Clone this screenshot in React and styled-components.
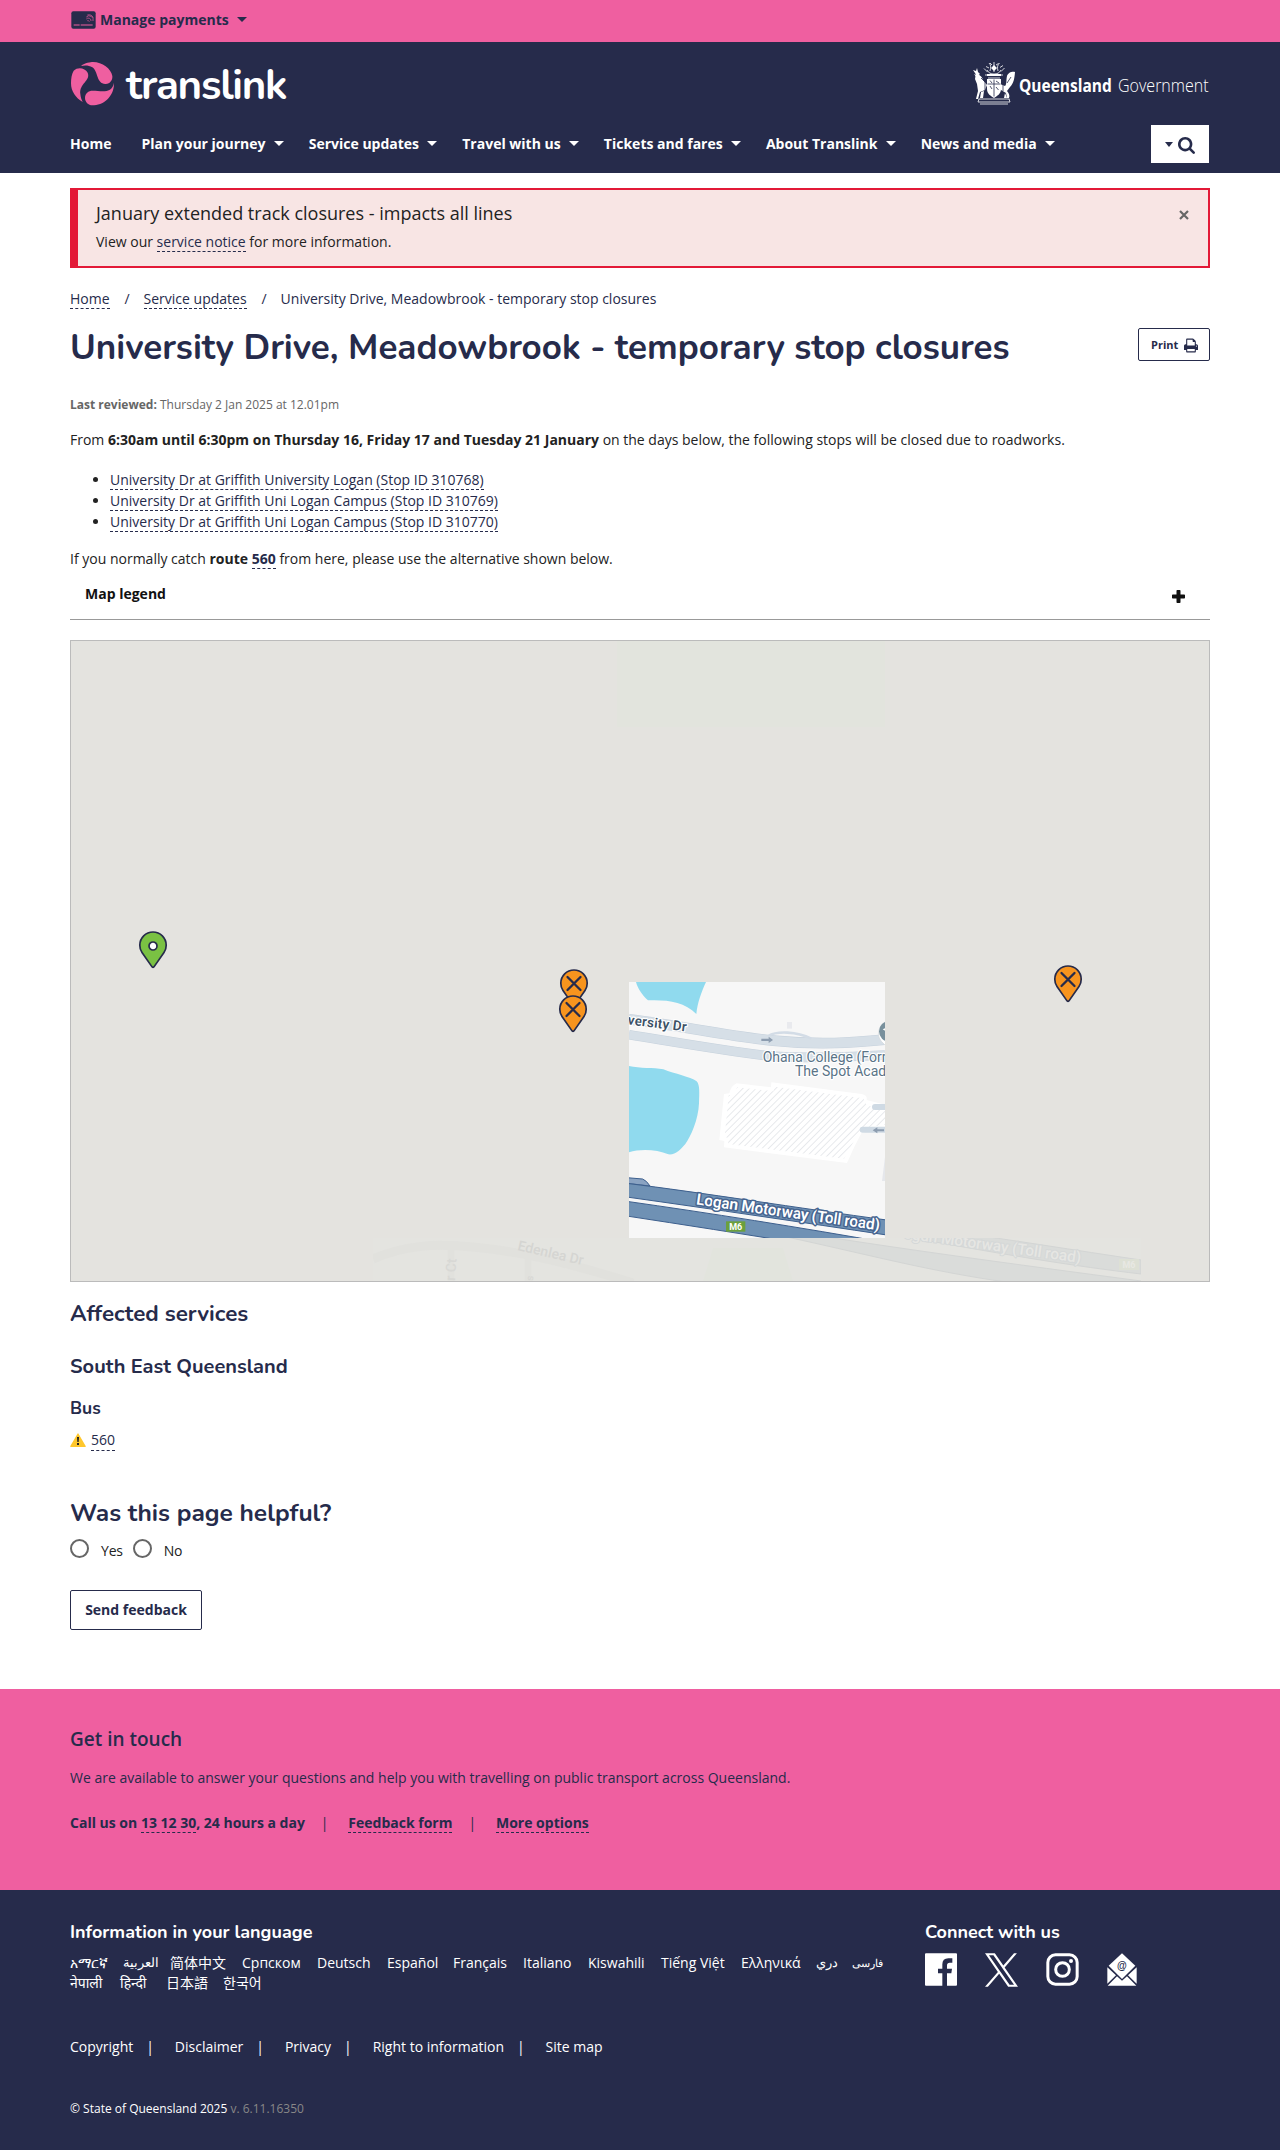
import React from 'react';
import styled, { createGlobalStyle } from 'styled-components';

const NAVY = '#262b4b';
const PINK = '#ef5fa0';
const SANS = "'Open Sans', 'Noto Sans', 'Noto Sans CJK SC', sans-serif";
const ROUND = "Nunito, Lato, 'Open Sans', sans-serif";

const GlobalStyle = createGlobalStyle`
  * { box-sizing: border-box; }
  body { margin: 0; background: #fff; color: #222; font-family: ${SANS}; font-size: 14px; line-height: 21px; }
  h1, h2, h3, h4, p, ul { margin: 0; padding: 0; font-weight: inherit; font-size: inherit; }
`;

const Container = styled.div`
  width: 1140px;
  margin: 0 auto;
`;

/* ---------- top bar ---------- */
const TopBar = styled.div`
  background: ${PINK};
  height: 42px;
  color: ${NAVY};
`;
const Payments = styled.a`
  display: flex;
  align-items: center;
  height: 39px;
  padding-left: 1px;
  font-weight: 700;
  svg { margin-right: 4px; }
`;
const Caret = styled.span`
  border-left: ${(p) => p.$w || 5}px solid transparent;
  border-right: ${(p) => p.$w || 5}px solid transparent;
  border-top: ${(p) => p.$h || 5}px solid currentColor;
  margin-left: 8px;
`;

/* ---------- header ---------- */
const Header = styled.header`
  background: ${NAVY};
  color: #fff;
  height: 131px;
`;
const Brand = styled.div`
  display: flex;
  justify-content: space-between;
  height: 83px;
  padding: 20px 1px 0 1px;
`;
const Logo = styled.div`
  display: flex;
  gap: 12px;
`;
const Wordmark = styled.span`
  font-family: ${ROUND};
  font-weight: 700;
  font-size: 42px;
  line-height: 48px;
  letter-spacing: -1.25px;
`;
const Government = styled.div`
  display: flex;
  height: 46px;
  font-size: 18px;
  line-height: 46px;
  svg { flex: none; margin-top: -1px; }
`;
const GovWord = styled.span`
  font-weight: ${(p) => p.$weight};
  width: ${(p) => p.$w}px;
  white-space: nowrap;
  transform: scaleX(${(p) => p.$scale});
  transform-origin: 0 50%;
`;
const Nav = styled.nav`
  display: flex;
  justify-content: space-between;
  align-items: flex-start;
  height: 48px;
  padding-right: 1px;
`;
const NavItems = styled.div`
  display: flex;
  gap: 25.2px;
  height: 37px;
  align-items: center;
`;
const NavItem = styled.a`
  display: flex;
  align-items: center;
  font-weight: 700;
  margin-right: ${(p) => (p.$plain ? 4.8 : 0)}px;
`;
const SearchButton = styled.button`
  width: 58px;
  height: 38px;
  border: 0;
  background: #fff;
  color: ${NAVY};
  display: flex;
  align-items: center;
  padding: 3px 0 0 14px;
  gap: 5px;
  ${Caret} { margin: 0 0 3px; }
`;

/* ---------- alert ---------- */
const Alert = styled.section`
  margin-top: 15px;
  height: 80px;
  border: 2px solid #e31937;
  border-left-width: 8px;
  background: #f8e5e4;
  display: flex;
  justify-content: space-between;
  padding: 12px 19px 0 18px;
`;
const AlertTitle = styled.h2`
  font-size: 18px;
  line-height: 22px;
  margin-bottom: 7px;
`;
const Close = styled.button`
  border: 0;
  background: none;
  padding: 7px 0 0;
  height: 18px;
  line-height: 0;
`;

/* ---------- page body ---------- */
const Link = styled.a`
  color: ${NAVY};
  border-bottom: 1px dashed ${NAVY};
`;
const Breadcrumbs = styled.nav`
  margin-top: 20px;
  display: flex;
  height: 21px;
  color: ${NAVY};
`;
const Slash = styled.span`
  width: 34px;
  padding-left: 1px;
  text-align: center;
`;
const TitleRow = styled.div`
  margin-top: 19px;
  display: flex;
  justify-content: space-between;
  align-items: flex-start;
  height: 67px;
`;
const Title = styled.h1`
  font-family: ${ROUND};
  font-weight: 700;
  color: ${NAVY};
  font-size: 35px;
  line-height: 40px;
  white-space: nowrap;
`;
const PrintButton = styled.button`
  width: 72px;
  height: 33px;
  border: 1px solid ${NAVY};
  border-radius: 2px;
  background: #fff;
  color: ${NAVY};
  font: 700 11px/16px ${SANS};
  display: flex;
  align-items: center;
  padding: 1px 11px 0 12px;
  justify-content: space-between;
`;
const Reviewed = styled.p`
  font-size: 12px;
  line-height: 20px;
  color: #666;
`;
const Paragraph = styled.p`
  margin-top: ${(p) => p.$top}px;
  b { font-weight: 700; }
`;
const StopList = styled.ul`
  margin-top: 19px;
  padding-left: 40px;
`;
const Legend = styled.div`
  margin-top: 10px;
  height: 41px;
  border-bottom: 1px solid #999;
  display: flex;
  justify-content: space-between;
  padding: 4px 25px 0 15px;
  font-weight: 700;
  color: #111;
`;
const PlusWrap = styled.span`
  padding-top: 7px;
  line-height: 0;
`;
const MapFrame = styled.div`
  margin-top: 20px;
  height: 642px;
  border: 1px solid #bbb;
  background: #e4e3df;
  svg { display: block; }
`;
const Heading = styled.h3`
  font-family: ${ROUND};
  font-weight: 700;
  color: ${(p) => p.$color || NAVY};
  font-size: ${(p) => p.$size}px;
  line-height: ${(p) => p.$line}px;
  margin-top: ${(p) => p.$top || 0}px;
`;
const RouteRow = styled.div`
  display: flex;
  align-items: center;
  height: 21px;
  gap: 5px;
  margin-top: 9px;
`;
const RadioRow = styled.div`
  display: flex;
  margin-top: 11px;
  height: 24px;
`;
const Radio = styled.label`
  display: flex;
  gap: 12px;
  margin-right: 10px;
  line-height: 24px;
  letter-spacing: -0.2px;
`;
const RadioDot = styled.span`
  width: 19px;
  height: 19px;
  border: 2px solid #666;
  border-radius: 50%;
`;
const FeedbackButton = styled.button`
  display: block;
  margin-top: 27px;
  width: 132px;
  height: 40px;
  border: 1px solid ${NAVY};
  border-radius: 2px;
  background: #fff;
  color: ${NAVY};
  font: 700 14px/21px ${SANS};
  padding: 0 0 1px;
`;

/* ---------- contact band ---------- */
const Contact = styled.section`
  margin-top: 59px;
  background: ${PINK};
  color: ${NAVY};
  height: 201px;
  padding-top: 37px;
`;
const ContactTitle = styled.h3`
  font-weight: 600;
  font-size: 19px;
  line-height: 26px;
`;
const ContactLinks = styled.div`
  margin-top: 24px;
  display: flex;
  font-weight: 700;
`;
const Bar = styled.span`
  width: ${(p) => p.$w}px;
  padding-right: ${(p) => p.$shift}px;
  text-align: center;
  font-weight: 400;
`;

/* ---------- footer ---------- */
const Footer = styled.footer`
  background: ${NAVY};
  color: #fff;
  height: 260px;
  padding-top: 30px;
`;
const FooterColumns = styled.div`
  display: grid;
  grid-template-columns: 855px 1fr;
  height: 116px;
`;
const Languages = styled.div`
  display: flex;
  flex-wrap: wrap;
  column-gap: 16px;
  margin-top: 8px;
  width: 820px;
`;
const Language = styled.a`
  height: 20px;
  width: ${(p) => p.$w}px;
  font-size: ${(p) => p.$size || 14}px;
  line-height: 21px;
  white-space: nowrap;
`;
const Social = styled.div`
  display: flex;
  gap: 28px;
  margin-top: 9px;
`;
const FooterLinks = styled.div`
  display: flex;
  height: 21px;
`;
const Copyright = styled.p`
  margin-top: 41px;
  font-size: 12px;
  span { color: #888; }
`;

/* ---------- drawings ---------- */
const CardIcon = () => (
  <svg width="25" height="18" viewBox="0 0 75 54">
    <rect x="1" y="1" width="73" height="52" rx="6" fill={NAVY} />
    <path d="M8 42h18M29 42h36" stroke={PINK} strokeWidth="3" />
    <g fill="none" stroke={PINK} strokeWidth="2">
      <path d="M46 18a12 12 0 0 1 20 12M46 24a8 8 0 0 1 14 6M49 29a5 5 0 0 1 6 3M49 12a16 16 0 0 1 18 8" />
    </g>
  </svg>
);

const LogoMark = () => (
  <svg width="43" height="44" viewBox="0 0 129 132">
    <g fill={PINK}>
      <path d="M30 12C42 2 58 0 66 0c28 0 54 20 58 42 1 12-6 23-20 24-28 1-22-38-40-50C54 10 42 9 30 12z" />
      <path d="M8 26c12-12 34-9 42 6 10 24-26 32-22 64 1 10 3 16 7 24C14 108 0 88 0 64 0 50 2 36 8 26z" />
      <path d="M129 62c1 42-32 68-65 68-12 0-22-10-22-22 0-14 10-22 23-22 14 0 28 4 42 1 12-3 20-12 22-25z" />
    </g>
  </svg>
);

const Crest = () => (
  <svg width="47" height="44" viewBox="0 0 94 88">
    <g fill="none" stroke="#fff" strokeWidth="1.6">
      <path d="M36 20c2-8 2-12-2-16M44 22V2M52 20c-2-8-1-12 3-16M34 14l-6-3M56 13l6-4M40 8l-4-4M48 8l5-3M31 22l-7-7M58 21l7-7M30 18c3 6 8 8 14 8s11-2 14-8" />
      <path d="M26 28h36M32 34h24M13 76h62M12 82l2-6M76 82l-2-6M12 82h64M16 86h56" />
    </g>
    <g fill="#fff">
      <path d="M30 26h28v4H30zM38 14l6-6 6 6-6 6zM30 36h28v20c0 10-8 14-14 18-6-4-14-8-14-18z" />
      <path d="M8 24c4 2 12 6 14 14l8 10-4 10-10 4-4 14H8l4-16-2-14-4-10z" />
      <path d="M66 50c4-4 2-12 4-20 2-8 12-10 16-8-1 12-2 22-10 30l-6 8c4 4 6 10 4 14h-4l-2-10-10-6-2-12z" />
      <path d="M2 18l6 2 2-6 2 8 4 4-6 4zM4 26l8 4-2 4zM16 74l2-12 6-2-2 14zM64 74l2-10 4 10z" />
    </g>
    <g fill="none" stroke={NAVY} strokeWidth="1.6">
      <path d="M31 46h26M44 37v34M36 39l4 5M48 40l6 4M36 50l4 6M48 52l5 6M18 34l8 8M70 44l8-12M26 36v22M62 36v24" />
    </g>
  </svg>
);

const SearchIcon = () => (
  <svg width="17" height="17" viewBox="0 128 1664 1664" fill="currentColor">
    <path d="M1152 832q0-185-131.5-316.5t-316.500-131.500-316.500 131.500-131.500 316.500 131.500 316.500 316.500 131.500 316.500-131.500 131.500-316.500zM1664 1664q0 52-38 90t-90 38q-54 0-90-38l-343-342q-179 124-399 124-143 0-273.500-55.500t-225-150-150-225-55.500-273.500 55.500-273.500 150-225 225-150 273.500-55.500 273.500 55.500 225 150 150 225 55.500 273.500q0 220-124 399l343 343q37 37 37 90z" />
  </svg>
);

const PrintIcon = () => (
  <svg width="14" height="15" viewBox="0 64 1664 1664" preserveAspectRatio="none" fill="currentColor">
    <path d="M384 1536h896v-256h-896v256zM384 896h896v-384h-160q-40 0-68-28t-28-68v-160h-640v640zM1536 960q0-26-19-45t-45-19-45 19-19 45 19 45 45 19 45-19 19-45zM1664 960v416q0 13-9.500 22.500t-22.500 9.500h-224v160q0 40-28 68t-68 28h-960q-40 0-68-28t-28-68v-160h-224q-13 0-22.500-9.500t-9.500-22.500v-416q0-79 56.500-135.500t135.500-56.500h64v-544q0-40 28-68t68-28h672q40 0 88 20t76 48l152 152q28 28 48 76t20 88v256h64q79 0 135.500 56.500t56.500 135.500z" />
  </svg>
);

const CloseIcon = () => (
  <svg width="10" height="10" viewBox="0 0 10 10" stroke="#666" strokeWidth="2.2">
    <path d="M1 1l8 8M9 1l-8 8" />
  </svg>
);

const PlusIcon = () => (
  <svg width="13" height="13" viewBox="0 0 13 13" fill="#111">
    <path d="M4.500 .8Q4.500 0 5.300 0h2.400Q8.500 0 8.500 .8V4.500h3.700q.8 0 .8.800v2.400q0 .8-.8.800H8.500v3.700q0 .8-.8.800H5.300Q4.500 13 4.500 12.200V8.500H.8Q0 8.500 0 7.700V5.300Q0 4.500 .8 4.500H4.500z" />
  </svg>
);

const WarningIcon = () => (
  <svg width="16" height="14" viewBox="0 0 48 42">
    <path d="M24 1q1 0 2 2l21 36q1 3-1 3H2q-2 0-1-3L22 3q1-2 2-2z" fill="#ffc72c" />
    <path d="M21 12h6l-1 15h-4zM21 30h6v6h-6z" fill="#222" />
  </svg>
);

const FacebookIcon = () => (
  <svg width="32" height="33" viewBox="0 0 96 99">
    <path fill="#fff" d="M3 1h90q3 0 3 3v91q0 3-3 3H66V61h13l2-14H66V37q0-8 8-8h8V16H70Q52 16 52 34v13H39v14h13v37H3q-3 0-3-3V4q0-3 3-3z" />
  </svg>
);
const XIcon = () => (
  <svg width="33" height="34" viewBox="0 0 1200 1227">
    <path fill="#fff" d="M714.163 519.284L1160.890 0H1055.030L667.137 450.887L357.328 0H0L468.492 681.821L0 1226.370H105.866L515.491 750.218L842.672 1226.370H1200L714.137 519.284H714.163ZM569.165 687.828L521.697 619.934L144.011 79.694H306.615L611.412 515.685L658.880 583.579L1055.080 1150.300H892.476L569.165 687.854V687.828Z" />
  </svg>
);
const InstagramIcon = () => (
  <svg width="33" height="33" viewBox="0 0 99 99">
    <g fill="none" stroke="#fff" strokeWidth="9">
      <rect x="5.500" y="5.500" width="88" height="88" rx="23" />
      <circle cx="49.500" cy="49.500" r="20.500" />
    </g>
    <circle cx="75" cy="24" r="6" fill="#fff" />
  </svg>
);
const MailIcon = () => (
  <svg width="30" height="33" viewBox="0 0 90 99">
    <g fill="#fff">
      <path d="M45 1l40 37-40 40L5 38z" />
      <path d="M1 43l26 24L1 92zM89 43L63 67l26 25zM30 70l15 13 15-13 28 28H2z" />
    </g>
    <text x="45" y="47" textAnchor="middle" fontFamily="Liberation Sans, sans-serif" fontWeight="700" fontSize="30" fill={NAVY}>@</text>
  </svg>
);

const Pin = ({ x, y, open }) => (
  <g transform={`translate(${x} ${y})`} stroke={NAVY} strokeWidth="1.700">
    <path d="M0 17.800Q-.8 17.800-1.500 16.600L-11 3Q-13.200 0-13.200-4.300A13.200 13.200 0 0 1 13.200-4.300Q13.200 0 11 3L1.500 16.600Q.8 17.800 0 17.800z" fill={open ? '#7ac143' : '#f7941e'} />
    {open ? <circle cy="-3.500" r="4" fill="#fff" /> : <path d="M-6.500-10.500l13 13M6.500-10.500l-13 13" strokeWidth="2.300" strokeLinecap="round" />}
  </g>
);

const CentreTile = () => (
  <svg x="558" y="341" width="256" height="256" viewBox="87 66 768 768">
    <defs>
      <pattern id="hatch" width="14" height="14" patternUnits="userSpaceOnUse" patternTransform="rotate(45)">
        <rect width="14" height="14" fill="#fff" />
        <path d="M0 0V14" stroke="#dcdfe3" strokeWidth="4" />
      </pattern>
    </defs>
    <rect x="87" y="66" width="768" height="768" fill="#f7f7f7" />
    <g fill="#90daee">
      <path d="M108 66C114 88 128 106 144 121C200 119 252 124 289 162C292 130 304 96 318 66z" />
      <path d="M87 318C120 326 160 322 190 328C225 342 270 350 290 364C300 374 298 400 297 430C295 480 272 530 256 552C240 570 228 585 205 583C170 568 120 566 87 577z" />
    </g>
    <g fill="none">
      <path d="M87 178C250 198 380 228 520 242S760 248 855 239" stroke="#c6d1dc" strokeWidth="32" />
      <path d="M87 178C250 198 380 228 520 242S760 248 855 239" stroke="#d6dfe7" strokeWidth="29" />
      <path d="M87 224C260 252 400 276 500 287S760 290 855 285" stroke="#c6d1dc" strokeWidth="29" />
      <path d="M87 224C260 252 400 276 500 287S760 290 855 285" stroke="#d6dfe7" strokeWidth="26" />
      <path d="M505 228C530 212 590 214 634 236" stroke="#d3dce6" strokeWidth="8" />
    </g>
    <rect x="561" y="186" width="15" height="20" fill="#e9eaee" />
    <path d="M484 236h22v-6l13 10-13 9v-6h-22z" fill="#8d9db0" />
    <path d="M372 402L388 400Q394 376 410 370L513 382L514 367L785 402Q803 406 800 420L855 434V500L784 520Q762 560 741 609L372 562L373 543L358 540z" fill="#fff" />
    <path d="M386 406L400 404L412 382L520 394L524 380L790 415L800 436L855 452V494L784 504L732 596L385 552L384 534L374 530z" fill="url(#hatch)" />
    <path d="M825 441H855M788 509H855" stroke="#cfdae4" strokeWidth="18" strokeLinecap="round" />
    <path d="M852 508h-20v-6l-14 9 14 9v-6h20z" fill="#8d9db0" />
    <path d="M846 663L855 590V663z" fill="#e5e7eb" />
    <g stroke="#3d5f8d" strokeWidth="3">
      <path d="M80 653L128 657Q140 662 150 678L80 670z" fill="#8aa3c2" />
      <path d="M80 670C300 697 600 745 860 780V825C600 786 350 749 80 711z" fill="#6f91b4" />
      <path d="M80 724C320 758 600 802 870 850L600 850C430 822 250 794 80 768z" fill="#6f91b4" />
    </g>
    <rect x="378" y="784" width="58" height="31" fill="#6ba03d" />
    <g fontFamily="Roboto, sans-serif">
      <text x="407" y="809" textAnchor="middle" fontSize="27" fontWeight="700" fill="#fff">M6</text>
      <g stroke="#fff" strokeWidth="7" strokeLinejoin="round" paintOrder="stroke">
        <text transform="translate(82 193) rotate(7)" fontSize="41" fontWeight="600" fill="#3c5166" textLength="178">versity Dr</text>
        <text x="488" y="306" fontSize="42" fill="#5a7487">Ohana College (Formerly</text>
        <text x="585" y="348" fontSize="42" fill="#5a7487">The Spot Academy</text>
      </g>
      <text transform="translate(287 733) rotate(8.100)" fontSize="47" fontWeight="600" fill="#fff" stroke="#46648f" strokeWidth="9" paintOrder="stroke" strokeLinejoin="round" textLength="556">Logan Motorway (Toll road)</text>
    </g>
    <path d="M872 182a38 38 0 0 0-28 62l30 30z" fill="#fff" stroke="#d5d9dc" strokeWidth="2" />
    <circle cx="868" cy="214" r="31" fill="#78909c" />
    <path d="M848 208l20-10v22z" fill="#fff" />
  </svg>
);

const StopMap = () => (
  <svg width="1138" height="640" viewBox="0 0 1138 640">
    <rect x="546" y="0" width="268" height="86" fill="#e2e4dd" />
    <svg x="302" y="597" width="768" height="43">
      <rect width="768" height="43" fill="#e4e4e0" />
      <g fill="none" stroke="#e1e1dd">
        <path d="M0 21C30 8 60 5 100 9S180 20 260 45" strokeWidth="9" />
        <path d="M78 12V43M155 18V43" strokeWidth="7" />
      </g>
      <path d="M340 10h70l10 33h-90z" fill="#e2e4dd" />
      <g fill="#dadcda" stroke="#d3d5d4">
        <path d="M410-8C520 10 640 26 768 43V55C600 50 520 20 380-8z" />
        <path d="M580-6C640 2 700 12 768 22V36C700 28 640 18 540 0z" />
      </g>
      <g fontFamily="Roboto, sans-serif" fontWeight="500" fontSize="14">
        <text transform="translate(144 12) rotate(13)" fill="#d5d5d2">Edenlea Dr</text>
        <text transform="translate(82 43) rotate(-86)" fill="#d8d8d5">r Ct</text>
        <text transform="translate(160 43) rotate(-86)" fill="#d8d8d5" fontSize="10">s</text>
        <text transform="translate(530 0) rotate(8)" fontSize="15.500" fill="#e6e6e3" stroke="#d5d8d8" strokeWidth="2" paintOrder="stroke" textLength="179">ogan Motorway (Toll road)</text>
      </g>
      <rect x="746" y="21" width="20" height="11" fill="#dde0d5" />
      <text x="756" y="30" textAnchor="middle" fontFamily="Roboto, sans-serif" fontSize="9" fontWeight="700" fill="#e8e8e3">M6</text>
    </svg>
    <CentreTile />
    <Pin x={82} y={308.5} open />
    <Pin x={503} y={346.5} />
    <Pin x={502} y={372.5} />
    <Pin x={997} y={342.5} />
  </svg>
);

const NAV = ['Plan your journey', 'Service updates', 'Travel with us', 'Tickets and fares', 'About Translink', 'News and media'];
const LANGUAGES = [
  ['አማርኛ', 37], ['العربية', 31, 12.5], ['简体中文', 56], ['Српском', 59], ['Deutsch', 54], ['Español', 50], ['Français', 54],
  ['Italiano', 49], ['Kiswahili', 57], ['Tiếng Việt', 64], ['Ελληνικά', 59], ['دري', 20, 13], ['فارسی', 31, 11],
  ['नेपाली', 34], ['हिन्दी', 30], ['日本語', 41], ['한국어', 41],
];
const STOPS = [
  'University Dr at Griffith University Logan (Stop ID 310768)',
  'University Dr at Griffith Uni Logan Campus (Stop ID 310769)',
  'University Dr at Griffith Uni Logan Campus (Stop ID 310770)',
];
const LEGAL = ['Copyright', 'Disclaimer', 'Privacy', 'Right to information', 'Site map'];

export default function App() {
  return (
    <>
      <GlobalStyle />
      <TopBar>
        <Container>
          <Payments><CardIcon />Manage payments<Caret /></Payments>
        </Container>
      </TopBar>
      <Header>
        <Container>
          <Brand>
            <Logo><LogoMark /><Wordmark>translink</Wordmark></Logo>
            <Government>
              <Crest />
              <GovWord $weight={700} $w={99} $scale={0.86}>Queensland</GovWord>
              <GovWord $weight={300} $w={91} $scale={0.89}>Government</GovWord>
            </Government>
          </Brand>
          <Nav>
            <NavItems>
              <NavItem $plain>Home</NavItem>
              {NAV.map((label) => <NavItem key={label}>{label}<Caret /></NavItem>)}
            </NavItems>
            <SearchButton><Caret $w={4} $h={5} /><SearchIcon /></SearchButton>
          </Nav>
        </Container>
      </Header>
      <Container>
        <Alert>
          <div>
            <AlertTitle>January extended track closures - impacts all lines</AlertTitle>
            <p>View our <Link>service notice</Link> for more information.</p>
          </div>
          <Close><CloseIcon /></Close>
        </Alert>
        <Breadcrumbs>
          <span><Link>Home</Link></span><Slash>/</Slash>
          <span><Link>Service updates</Link></span><Slash>/</Slash>
          <span>University Drive, Meadowbrook - temporary stop closures</span>
        </Breadcrumbs>
        <TitleRow>
          <Title>University Drive, Meadowbrook - temporary stop closures</Title>
          <PrintButton>Print <PrintIcon /></PrintButton>
        </TitleRow>
        <Reviewed><b>Last reviewed:</b> Thursday 2 Jan 2025 at 12.01pm</Reviewed>
        <Paragraph $top={14}>
          From <b>6:30am until 6:30pm on Thursday 16, Friday 17 and Tuesday 21 January</b> on the days below, the following stops will be closed due to roadworks.
        </Paragraph>
        <StopList>
          {STOPS.map((s) => <li key={s}><Link>{s}</Link></li>)}
        </StopList>
        <Paragraph $top={16}>
          If you normally catch <b>route <Link>560</Link></b> from here, please use the alternative shown below.
        </Paragraph>
        <Legend>Map legend<PlusWrap><PlusIcon /></PlusWrap></Legend>
        <MapFrame><StopMap /></MapFrame>
        <Heading $size={22.4} $line={28} $top={18}>Affected services</Heading>
        <Heading $size={20} $line={26} $top={26}>South East Queensland</Heading>
        <Heading $size={17.5} $line={23} $top={17}>Bus</Heading>
        <RouteRow><WarningIcon /><Link>560</Link></RouteRow>
        <Heading $size={24.5} $line={30} $top={48}>Was this page helpful?</Heading>
        <RadioRow>
          <Radio><RadioDot />Yes</Radio>
          <Radio><RadioDot />No</Radio>
        </RadioRow>
        <FeedbackButton>Send feedback</FeedbackButton>
      </Container>
      <Contact>
        <Container>
          <ContactTitle>Get in touch</ContactTitle>
          <Paragraph $top={15}>We are available to answer your questions and help you with travelling on public transport across Queensland.</Paragraph>
          <ContactLinks>
            <span>Call us on <Link>13 12 30</Link>, 24 hours a day</span>
            <Bar $w={43.5} $shift={4}>|</Bar><span><Link>Feedback form</Link></span>
            <Bar $w={43.5} $shift={4}>|</Bar><span><Link>More options</Link></span>
          </ContactLinks>
        </Container>
      </Contact>
      <Footer>
        <Container>
          <FooterColumns>
            <div>
              <Heading $size={18} $line={24} $color="#fff">Information in your language</Heading>
              <Languages>
                {LANGUAGES.map(([name, w, size]) => <Language key={name} $w={w} $size={size}>{name}</Language>)}
              </Languages>
            </div>
            <div>
              <Heading $size={18} $line={24} $color="#fff">Connect with us</Heading>
              <Social><FacebookIcon /><XIcon /><InstagramIcon /><MailIcon /></Social>
            </div>
          </FooterColumns>
          <FooterLinks>
            {LEGAL.map((label, i) => (
              <React.Fragment key={label}>
                {i > 0 && <Bar $w={41.6} $shift={8}>|</Bar>}
                <span>{label}</span>
              </React.Fragment>
            ))}
          </FooterLinks>
          <Copyright>© State of Queensland 2025 <span>v. 6.11.16350</span></Copyright>
        </Container>
      </Footer>
    </>
  );
}
